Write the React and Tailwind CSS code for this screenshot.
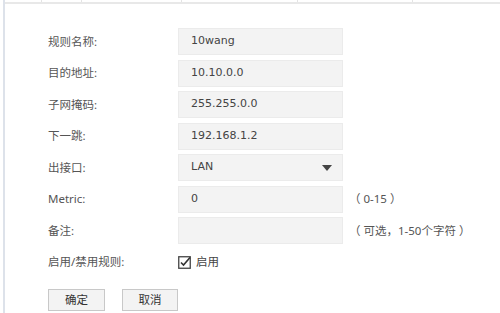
import React from "react";

const font = { fontFamily: '"Noto Sans", "Noto Sans CJK SC", sans-serif' };
const valueFont = { fontFamily: '"DejaVu Sans", "Noto Sans CJK SC", sans-serif' };

const rows = [
  { label: "规则名称:", value: "10wang" },
  { label: "目的地址:", value: "10.10.0.0" },
  { label: "子网掩码:", value: "255.255.0.0" },
  { label: "下一跳:", value: "192.168.1.2" },
  { label: "出接口:", value: "LAN", select: true },
  { label: "Metric:", value: "0", hint: "（ 0-15 ）" },
  { label: "备注:", value: "", hint: "（ 可选，1-50个字符 ）" },
];

function Field({ value, select }) {
  return (
    <div
      className="flex h-[27px] w-[165px] items-center justify-between border border-[#ebebeb] bg-[#f3f3f3] pl-[12px] pr-[10px] text-[11px] text-[#444]"
      style={valueFont}
    >
      <span>{value}</span>
      {select ? (
        <svg width="10" height="6" viewBox="0 0 10 6">
          <path d="M0 0 L10 0 L5 6 Z" fill="#444" />
        </svg>
      ) : null}
    </div>
  );
}

export default function App() {
  return (
    <div className="h-[313px] w-[500px] overflow-hidden bg-white" style={font}>
      <div className="flex h-full">
        <div className="ml-[3px] w-[2px] bg-[#dde2ea]" />
        <div className="flex-1">
          {/* table bottom edge */}
          <div className="flex h-[4px] border-b-2 border-[#e8e8e8]">
            <div className="w-[37px] border-r border-[#e4e4e4]" />
            <div className="w-[40px] border-r border-[#e4e4e4]" />
            <div className="w-[100px] border-r border-[#e4e4e4]" />
            <div className="w-[116px] border-r border-[#e4e4e4]" />
            <div className="w-[115px] border-r border-[#e4e4e4]" />
          </div>

          <div className="ml-[43px] mt-[24px] flex flex-col gap-y-[4.5px]">
            {rows.map((r) => (
              <div key={r.label} className="flex h-[27px] items-center">
                <div className="w-[130px] text-[11.5px] text-[#555]">{r.label}</div>
                <Field value={r.value} select={r.select} />
                {r.hint ? (
                  <div className="ml-[6px] text-[11.5px] text-[#555]">{r.hint}</div>
                ) : null}
              </div>
            ))}
            <div className="flex h-[27px] items-center">
              <div className="w-[130px] text-[11.5px] text-[#555]">启用/禁用规则:</div>
              <div className="flex items-center gap-[5px] text-[11.5px] text-[#444]">
                <svg width="13" height="13" viewBox="0 0 13 13">
                  <rect x="0.75" y="0.75" width="11.5" height="11.5" fill="#fff" stroke="#444" strokeWidth="1.3" />
                  <path d="M3 6.5 L5.5 9 L12 1.5" fill="none" stroke="#333" strokeWidth="1.6" />
                </svg>
                <span>启用</span>
              </div>
            </div>
          </div>

          <div className="ml-[43px] mt-[13px] flex gap-[17px]">
            <button className="h-[22px] w-[57px] border border-[#c8c8c8] bg-[#f3f3f3] text-[11.5px] text-[#333]">
              确定
            </button>
            <button className="h-[22px] w-[56px] border border-[#c8c8c8] bg-[#f3f3f3] text-[11.5px] text-[#333]">
              取消
            </button>
          </div>
        </div>
      </div>
    </div>
  );
}
